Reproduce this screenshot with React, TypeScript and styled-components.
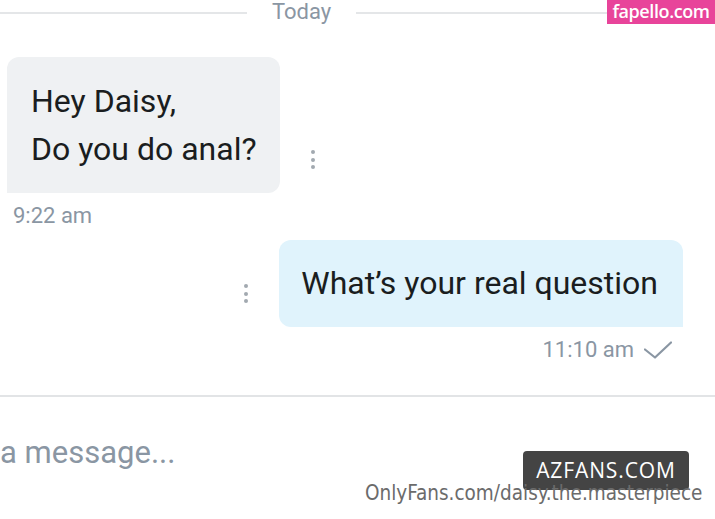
import styled, { createGlobalStyle } from "styled-components";

const GlobalStyle = createGlobalStyle`
  html, body {
    margin: 0;
    padding: 0;
    background: #fff;
  }
  body {
    font-family: Roboto, "Liberation Sans", sans-serif;
    color: #1c1f22;
  }
`;

const Screen = styled.div`
  position: relative;
  width: 715px;
  height: 519px;
  overflow: hidden;
  display: flex;
  flex-direction: column;
  background: #fff;
`;

const DayRow = styled.div`
  display: flex;
  align-items: center;
  height: 26px;
  gap: 25px;
`;

const DayLine = styled.div<{ $width?: number }>`
  height: 2px;
  background: #e4e6e8;
  ${(p) => (p.$width ? `width: ${p.$width}px;` : "flex: 1;")}
`;

const DayLabel = styled.span`
  font-size: 22px;
  line-height: 22px;
  color: #8a96a3;
  padding-bottom: 3px;
`;

const Messages = styled.div`
  display: flex;
  flex-direction: column;
  padding: 31px 0 0 7px;
`;

const MessageRow = styled.div<{ $out?: boolean }>`
  display: flex;
  align-items: flex-end;
  justify-content: ${(p) => (p.$out ? "flex-end" : "flex-start")};
  padding-right: ${(p) => (p.$out ? "32px" : "0")};
  margin-top: ${(p) => (p.$out ? "11px" : "0")};
`;

const Bubble = styled.div<{ $out?: boolean }>`
  font-size: 32px;
  line-height: 48px;
  color: #1a1d20;
  padding: ${(p) => (p.$out ? "19px 25px 20px 22px" : "20px 23px 20px 24px")};
  background: ${(p) => (p.$out ? "#e0f3fc" : "#eff1f3")};
  border-radius: ${(p) => (p.$out ? "12px 12px 0 12px" : "12px 12px 12px 0")};
  white-space: nowrap;
`;

const Dots = styled.div<{ $out?: boolean }>`
  display: flex;
  flex-direction: column;
  gap: 3.5px;
  margin: 0 31px 24px 31px;

  span {
    width: 4px;
    height: 4px;
    border-radius: 50%;
    background: #a2a9b0;
  }
`;

const Meta = styled.div<{ $out?: boolean }>`
  display: flex;
  align-items: center;
  gap: 10px;
  justify-content: ${(p) => (p.$out ? "flex-end" : "flex-start")};
  padding: ${(p) => (p.$out ? "0 43px 0 0" : "0 0 0 6px")};
  margin-top: 10px;
  font-size: 22px;
  line-height: 26px;
  color: #8a96a3;
`;

const Composer = styled.div`
  margin-top: 32px;
  border-top: 2px solid #e2e4e6;
  padding-top: 36px;
  font-size: 31px;
  line-height: 40px;
  color: #8a96a3;
`;

const PinkMark = styled.div`
  position: absolute;
  top: 0;
  right: 0;
  width: 108px;
  height: 24px;
  background: #e8449a;
  color: #fff;
  font-family: "Open Sans", sans-serif;
  font-weight: 600;
  font-size: 18px;
  line-height: 23px;
  text-align: center;
  letter-spacing: -0.4px;
  white-space: nowrap;
`;

const DarkMark = styled.div`
  position: absolute;
  left: 523px;
  top: 451px;
  width: 166px;
  height: 39px;
  border-radius: 4px;
  background: #444;
  color: #fff;
  font-family: "Open Sans", sans-serif;
  font-size: 21px;
  line-height: 39px;
  text-align: center;
  letter-spacing: 0.9px;
`;

const SourceMark = styled.div`
  position: absolute;
  left: 365px;
  top: 481px;
  font-family: "DejaVu Sans Condensed", "DejaVu Sans", sans-serif;
  font-stretch: condensed;
  font-size: 20.5px;
  line-height: 24px;
  color: #6b6b6b;
  white-space: nowrap;
`;

function MoreDots({ out }: { out?: boolean }) {
  return (
    <Dots $out={out}>
      <span />
      <span />
      <span />
    </Dots>
  );
}

function CheckIcon() {
  return (
    <svg width="28" height="18" viewBox="0 0 28 18" fill="none">
      <path
        d="M1 8.5 L11 16.5 L27 1.5"
        stroke="#8a96a3"
        strokeWidth="2.2"
        strokeLinecap="round"
        strokeLinejoin="round"
      />
    </svg>
  );
}

export default function App() {
  return (
    <Screen>
      <GlobalStyle />
      <DayRow>
        <DayLine $width={247} />
        <DayLabel>Today</DayLabel>
        <DayLine />
      </DayRow>

      <Messages>
        <MessageRow>
          <Bubble>
            Hey Daisy,
            <br />
            Do you do anal?
          </Bubble>
          <MoreDots />
        </MessageRow>
        <Meta>9:22 am</Meta>

        <MessageRow $out>
          <MoreDots out />
          <Bubble $out>What’s your real question</Bubble>
        </MessageRow>
        <Meta $out>
          11:10 am
          <CheckIcon />
        </Meta>
      </Messages>

      <Composer>a message...</Composer>

      <PinkMark>fapello.com</PinkMark>
      <DarkMark>AZFANS.COM</DarkMark>
      <SourceMark>OnlyFans.com/daisy.the.masterpiece</SourceMark>
    </Screen>
  );
}
